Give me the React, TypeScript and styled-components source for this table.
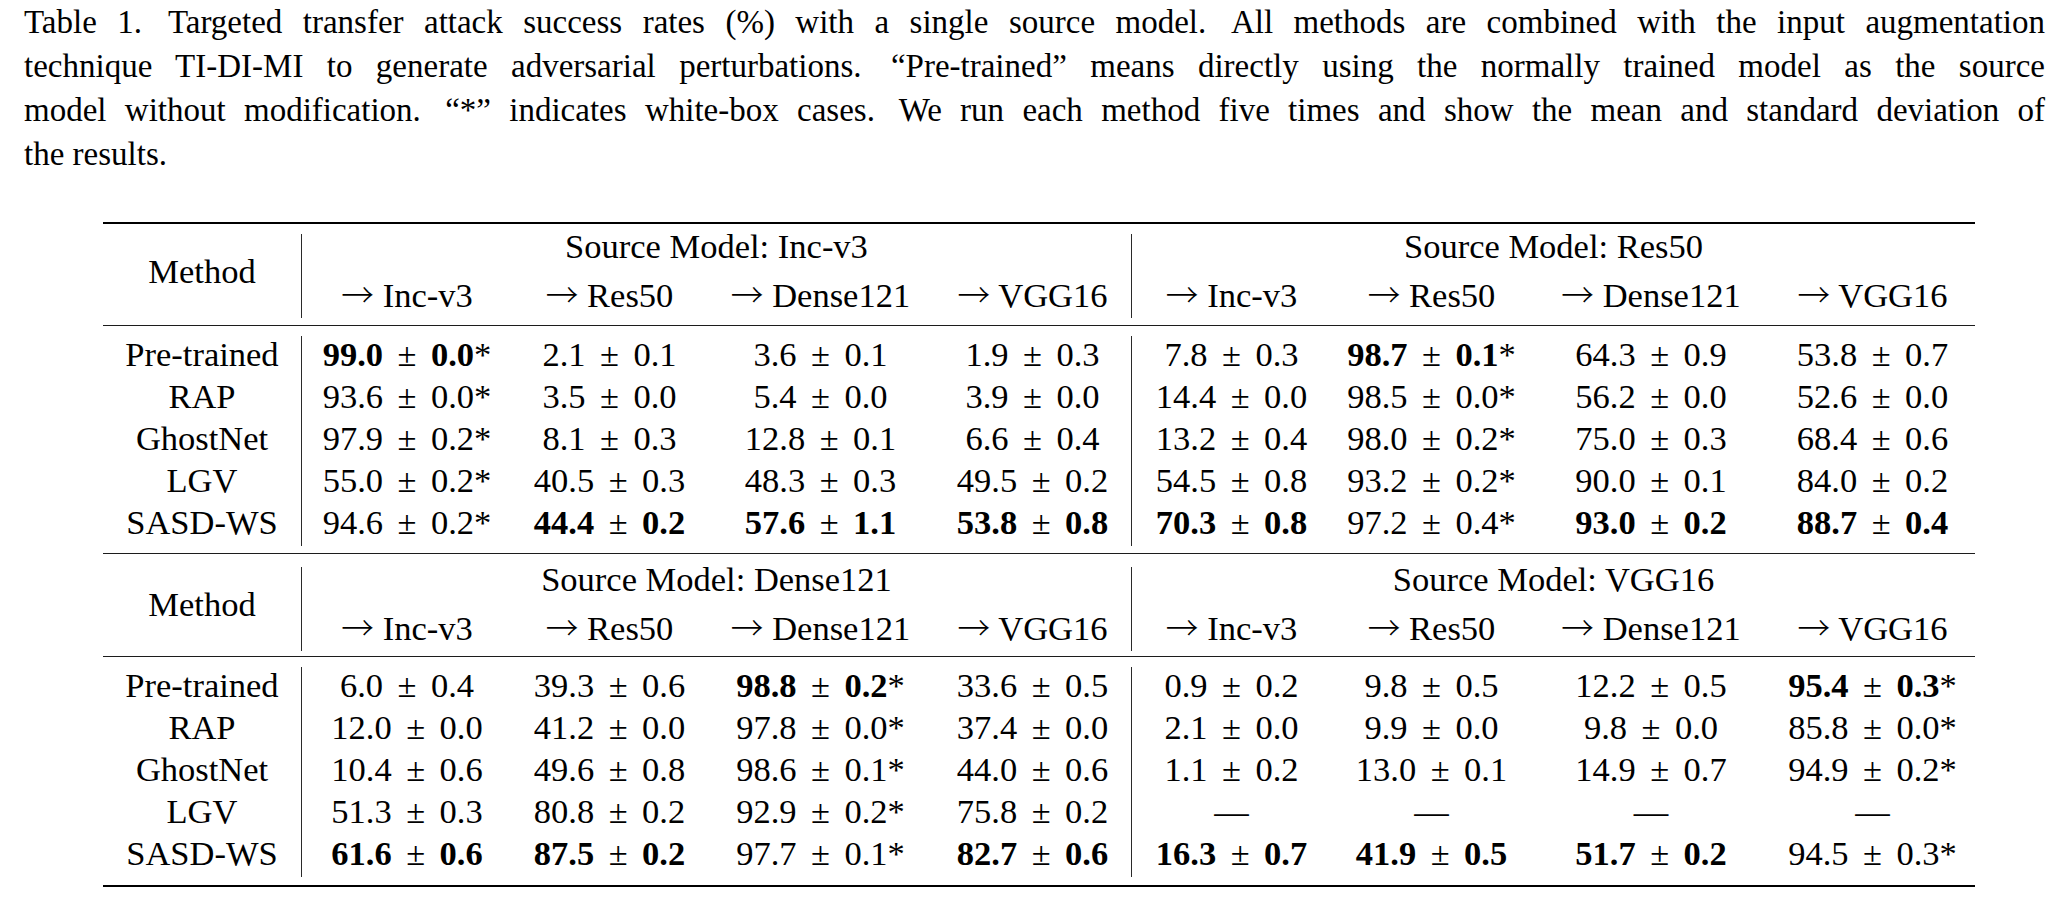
import React from 'react';
import styled, { createGlobalStyle } from 'styled-components';

// column widths measured off the original table (method + 2 groups of 4)
const COLS = '199px 210px 195px 227px 198px 199px 201px 238px 205px';

const GlobalStyle = createGlobalStyle`
  html, body {
    margin: 0;
    padding: 0;
    background: #fff;
  }
  body {
    font-family: 'Liberation Serif', 'Times New Roman', serif;
    color: #000;
  }
`;

const Page = styled.div`
  width: 2067px;
  height: 903px;
  overflow: hidden;
`;

const Caption = styled.div`
  width: 2021px;
  margin-left: 24px;
  font-size: 33px;
  line-height: 44px;
`;

const CaptionLine = styled.div<{ $last?: boolean }>`
  text-align: ${p => (p.$last ? 'left' : 'justify')};
  text-align-last: ${p => (p.$last ? 'left' : 'justify')};
`;

// the wider LaTeX space after a full stop
const Stop = styled.span`
  display: inline-block;
  width: 6px;
`;

const Table = styled.div`
  width: 1872px;
  margin: 46px 0 0 103px;
  font-size: 34.5px;
  line-height: 42px;
`;

const Rule = styled.div<{ $thick?: boolean }>`
  height: ${p => (p.$thick ? 2 : 1)}px;
  background: ${p => (p.$thick ? '#000' : '#1c1c1c')};
`;

// $space = [top, bottom] gap to the rules around the part
const Grid = styled.div<{ $space: [number, number] }>`
  display: grid;
  grid-template-columns: ${COLS};
  grid-auto-rows: 42px;
  margin: ${p => `${p.$space[0]}px 0 ${p.$space[1]}px`};
`;

// $lift moves the text up inside its cell (centred flex item overflowing evenly)
const Cell = styled.div<{ $line?: boolean; $span?: number; $rows?: number; $lift?: number }>`
  display: flex;
  align-items: center;
  justify-content: center;
  white-space: nowrap;
  padding-bottom: ${p => (p.$lift ?? 3) * 2}px;
  grid-column: span ${p => p.$span ?? 1};
  grid-row: span ${p => p.$rows ?? 1};
  border-right: ${p => (p.$line ? '1px solid #2a2a2a' : 'none')};
`;

const Num = styled.span<{ $bold?: boolean }>`
  font-weight: ${p => (p.$bold ? 700 : 400)};
`;

const Pm = styled.span`
  margin: 0 0.17em;
`;

const Arrow = styled.span`
  font-family: 'Noto Sans CJK SC', 'DejaVu Sans', sans-serif;
  font-weight: 300;
  font-size: 0.95em;
`;

const targets = ['Inc-v3', 'Res50', 'Dense121', 'VGG16'];

type Row = [string, string[]];

const blocks: { sources: [string, string]; rows: Row[] }[] = [
  {
    sources: ['Inc-v3', 'Res50'],
    rows: [
      ['Pre-trained', ['b99.0±0.0*', '2.1±0.1', '3.6±0.1', '1.9±0.3', '7.8±0.3', 'b98.7±0.1*', '64.3±0.9', '53.8±0.7']],
      ['RAP', ['93.6±0.0*', '3.5±0.0', '5.4±0.0', '3.9±0.0', '14.4±0.0', '98.5±0.0*', '56.2±0.0', '52.6±0.0']],
      ['GhostNet', ['97.9±0.2*', '8.1±0.3', '12.8±0.1', '6.6±0.4', '13.2±0.4', '98.0±0.2*', '75.0±0.3', '68.4±0.6']],
      ['LGV', ['55.0±0.2*', '40.5±0.3', '48.3±0.3', '49.5±0.2', '54.5±0.8', '93.2±0.2*', '90.0±0.1', '84.0±0.2']],
      ['SASD-WS', ['94.6±0.2*', 'b44.4±0.2', 'b57.6±1.1', 'b53.8±0.8', 'b70.3±0.8', '97.2±0.4*', 'b93.0±0.2', 'b88.7±0.4']],
    ],
  },
  {
    sources: ['Dense121', 'VGG16'],
    rows: [
      ['Pre-trained', ['6.0±0.4', '39.3±0.6', 'b98.8±0.2*', '33.6±0.5', '0.9±0.2', '9.8±0.5', '12.2±0.5', 'b95.4±0.3*']],
      ['RAP', ['12.0±0.0', '41.2±0.0', '97.8±0.0*', '37.4±0.0', '2.1±0.0', '9.9±0.0', '9.8±0.0', '85.8±0.0*']],
      ['GhostNet', ['10.4±0.6', '49.6±0.8', '98.6±0.1*', '44.0±0.6', '1.1±0.2', '13.0±0.1', '14.9±0.7', '94.9±0.2*']],
      ['LGV', ['51.3±0.3', '80.8±0.2', '92.9±0.2*', '75.8±0.2', '—', '—', '—', '—']],
      ['SASD-WS', ['b61.6±0.6', 'b87.5±0.2', '97.7±0.1*', 'b82.7±0.6', 'b16.3±0.7', 'b41.9±0.5', 'b51.7±0.2', '94.5±0.3*']],
    ],
  },
];

function Value({ v }: { v: string }) {
  if (v === '—') return <span>—</span>;
  const bold = v.startsWith('b');
  const star = v.endsWith('*');
  const [mean, std] = v.replace(/^b/, '').replace(/\*$/, '').split('±');
  return (
    <span>
      <Num $bold={bold}>{mean}</Num> <Pm>±</Pm> <Num $bold={bold}>{std}</Num>
      {star && '*'}
    </span>
  );
}

function Block({ sources, rows, first }: { sources: [string, string]; rows: Row[]; first?: boolean }) {
  return (
    <>
      <Grid $space={first ? [10, 7] : [13, 5]}>
        <Cell $rows={2} $line $lift={5}>Method</Cell>
        <Cell $span={4} $line $lift={9}>Source Model: {sources[0]}</Cell>
        <Cell $span={4} $lift={9}>Source Model: {sources[1]}</Cell>
        {[...targets, ...targets].map((t, i) => (
          <Cell key={i} $line={i === 3}>
            <span>
              <Arrow>→</Arrow> {t}
            </span>
          </Cell>
        ))}
      </Grid>
      <Rule />
      <Grid $space={first ? [10, 7] : [10, 8]}>
        {rows.map(([name, values]) => (
          <React.Fragment key={name}>
            <Cell $line>{name}</Cell>
            {values.map((v, i) => (
              <Cell key={i} $line={i === 3}>
                <Value v={v} />
              </Cell>
            ))}
          </React.Fragment>
        ))}
      </Grid>
    </>
  );
}

export default function App() {
  return (
    <Page>
      <GlobalStyle />
      <Caption>
        <CaptionLine>
          Table 1.<Stop /> Targeted transfer attack success rates (%) with a single source model.<Stop /> All methods are combined with the input augmentation
        </CaptionLine>
        <CaptionLine>
          technique TI-DI-MI to generate adversarial perturbations.<Stop /> “Pre-trained” means directly using the normally trained model as the source
        </CaptionLine>
        <CaptionLine>
          model without modification.<Stop /> “*” indicates white-box cases.<Stop /> We run each method five times and show the mean and standard deviation of
        </CaptionLine>
        <CaptionLine $last>the results.</CaptionLine>
      </Caption>
      <Table>
        <Rule $thick />
        <Block sources={blocks[0].sources} rows={blocks[0].rows} first />
        <Rule />
        <Block sources={blocks[1].sources} rows={blocks[1].rows} />
        <Rule $thick />
      </Table>
    </Page>
  );
}
